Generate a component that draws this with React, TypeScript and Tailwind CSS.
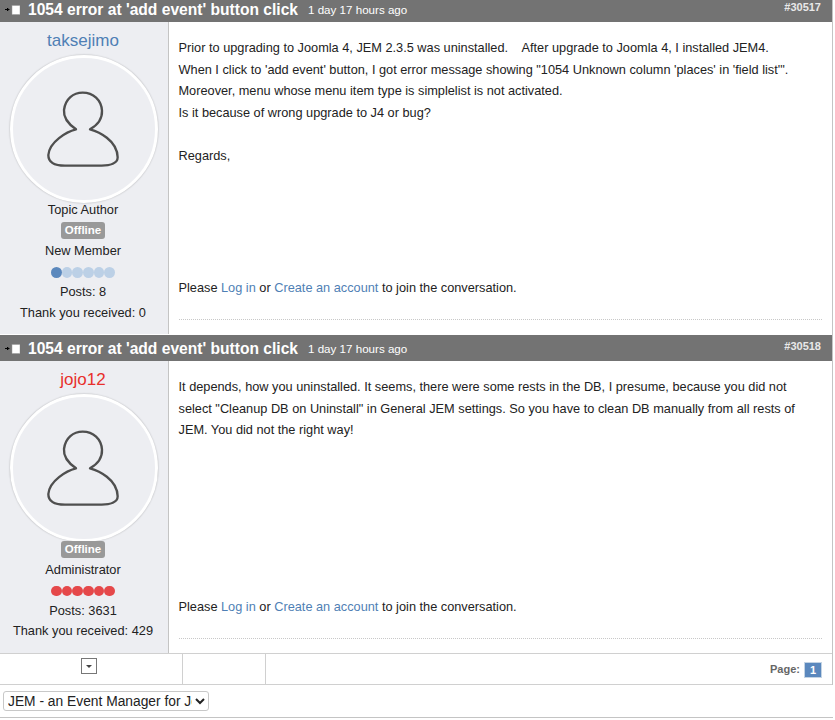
type PostProps = {
  title: string;
  id: string;
  headerH: string;
  bodyH: string;
  name: string;
  nameColor: string;
  role?: string;
  rank: string;
  dots: "blue" | "red";
  posts: string;
  thanks: string;
  children: React.ReactNode;
};

function Avatar() {
  return (
    <div className="w-[148px] h-[148px] ml-[1px] shrink-0 rounded-full border-[3px] border-white shadow-[0_0_2px_rgba(0,0,0,0.3)] flex items-center justify-center bg-[#edeef2]">
      <svg width="110" height="100" viewBox="0 0 330 300" fill="none" className="ml-[3px] mt-[2px]">
        <path
          d="M138 148 C112 130 100 112 102 90 C106 56 130 38 158 38 C190 38 214 60 216 92 C217 115 205 134 180 148 C205 155 262 180 263 232 C263 250 240 257 215 257 L105 257 C80 257 55 250 55 225 C58 185 110 155 138 148 Z"
          stroke="#4f4f4f"
          strokeWidth="7"
          strokeLinejoin="round"
        />
      </svg>
    </div>
  );
}

function RankDots({ color }: { color: "blue" | "red" }) {
  const on = color === "blue" ? 1 : 6;
  return (
    <div className="flex h-[20.6px] items-center justify-center pt-[1px]">
      {[0, 1, 2, 3, 4, 5].map((i) => {
        const lit = i < on;
        const cls =
          color === "red"
            ? "bg-[#e5484a]"
            : lit
              ? "bg-[#5b88bd]"
              : "bg-[#bcd0e6]";
        return <span key={i} className={`w-[10.6px] h-[10.6px] rounded-full ${cls}`} />;
      })}
    </div>
  );
}

function PostHeader({ title, id, height }: { title: string; id: string; height: string }) {
  return (
    <div className={`flex bg-[#737373] text-white pl-[5px] pr-[11px] ${height}`}>
      <div className="flex items-end pb-[3px] flex-1 min-w-0">
        <svg width="15" height="10" viewBox="0 0 15 10" className="mb-[4px] mr-[8px] shrink-0">
          <path d="M0 4.5 H4 M2.5 3 V6 M4 4.5 L3 3.5 M4 4.5 L3 5.5" stroke="#000" strokeWidth="1" />
          <rect x="7" y="0.5" width="8" height="9" fill="#fff" stroke="#9a9a9a" strokeWidth="0.5" />
        </svg>
        <span className="text-[15.6px] leading-[18px] font-bold">{title}</span>
        <span className="text-[11.6px] leading-[16px] ml-[10px] mb-[1px]">1 day 17 hours ago</span>
      </div>
      <span className="text-[11px] leading-[14px] font-bold self-end mb-[8px] text-[#e8e8e8]">{id}</span>
    </div>
  );
}

function Post(p: PostProps) {
  return (
    <div>
      <PostHeader title={p.title} id={p.id} height={p.headerH} />
      <div className={`flex ${p.bodyH}`}>
        <div className="w-[169px] shrink-0 bg-[#edeef2] border-r border-[#c4c4c4] pr-[2px] flex flex-col items-center text-[12.8px] leading-[20.6px] text-[#222]">
          <div className={`text-[17px] leading-[20px] pt-[9px] h-[33px] shrink-0 ${p.nameColor}`}>{p.name}</div>
          <Avatar />
          <div className="mt-[-3px] flex flex-col items-center">
            {p.role && <div>{p.role}</div>}
            <div className="h-[20.6px] flex items-center">
              <span className="bg-[#999] text-white font-bold text-[11.5px] leading-[15px] px-[4px] py-[1px] rounded-[3px]">Offline</span>
            </div>
            <div>{p.rank}</div>
            <RankDots color={p.dots} />
            <div>{p.posts}</div>
            <div>{p.thanks}</div>
          </div>
        </div>
        <div className="flex-1 min-w-0 flex flex-col pl-[9.5px] pr-[12px] text-[12.75px] leading-[21.6px] text-[#222]">
          <div className="flex-1 pt-[15px]">{p.children}</div>
          <div className="mb-[20px]">
            Please <a className="text-[#4f7fb5]">Log in</a> or <a className="text-[#4f7fb5]">Create an account</a> to join the conversation.
          </div>
          <div className="border-t border-dotted border-[#c8c8c8] mb-[14px] mr-[-2px]" />
        </div>
      </div>
    </div>
  );
}

export default function App() {
  const title = "1054 error at 'add event' button click";
  return (
    <div className="w-[835px] h-[720px] bg-white overflow-hidden font-['Liberation_Sans',Arial,sans-serif]">
      <div className="w-[833px] border-r border-[#c4c4c4]">
        <Post
          title={title}
          id="#30517"
          headerH="h-[22px]"
          bodyH="h-[312px]"
          name="taksejimo"
          nameColor="text-[#4f7fb5]"
          role="Topic Author"
          rank="New Member"
          dots="blue"
          posts="Posts: 8"
          thanks="Thank you received: 0"
        >
          <p>Prior to upgrading to Joomla 4, JEM 2.3.5 was uninstalled.&nbsp;&nbsp;&nbsp; After upgrade to Joomla 4, I installed JEM4.</p>
          <p>When I click to 'add event' button, I got error message showing "1054 Unknown column 'places' in 'field list'".</p>
          <p>Moreover, menu whose menu item type is simplelist is not activated.</p>
          <p>Is it because of wrong upgrade to J4 or bug?</p>
          <p className="mt-[21.6px]">Regards,</p>
        </Post>
        <div className="h-[1px] bg-white" />
        <Post
          title={title}
          id="#30518"
          headerH="h-[26px]"
          bodyH="h-[292px]"
          name="jojo12"
          nameColor="text-[#e8302c]"
          rank="Administrator"
          dots="red"
          posts="Posts: 3631"
          thanks="Thank you received: 429"
        >
          <p>It depends, how you uninstalled. It seems, there were some rests in the DB, I presume, because you did not select "Cleanup DB on Uninstall" in General JEM settings. So you have to clean DB manually from all rests of JEM. You did not the right way!</p>
        </Post>
        <div className="flex h-[32px] border-t border-b border-[#d0d0d0]">
          <div className="w-[183px] border-r border-[#d0d0d0] flex justify-center pt-[4px] pr-[4px]">
            <span className="w-[16px] h-[16px] border border-[#777] flex items-center justify-center">
              <span className="w-0 h-0 border-l-[3px] border-r-[3px] border-t-[3px] border-l-transparent border-r-transparent border-t-[#444]" />
            </span>
          </div>
          <div className="w-[83px] border-r border-[#d0d0d0]" />
          <div className="flex-1 flex items-center justify-end pr-[10px] pt-[1px] gap-[4px]">
            <span className="text-[11px] font-bold text-[#666]">Page:</span>
            <span className="bg-[#5b88bd] border border-[#c4d4e4] text-white text-[11px] font-bold w-[18px] h-[16px] leading-[14px] text-center">1</span>
          </div>
        </div>
      </div>
      <div className="w-[833px] h-[33px] flex items-start border-b border-[#c4c4c4] pl-[3px] pt-[6px]">
        <select className="w-[206px] h-[20px] bg-white border border-[#c8c8c8] rounded-[3px] text-[13.8px] leading-[18px] text-[#222]">
          <option>JEM - an Event Manager for Joomla</option>
        </select>
      </div>
    </div>
  );
}
